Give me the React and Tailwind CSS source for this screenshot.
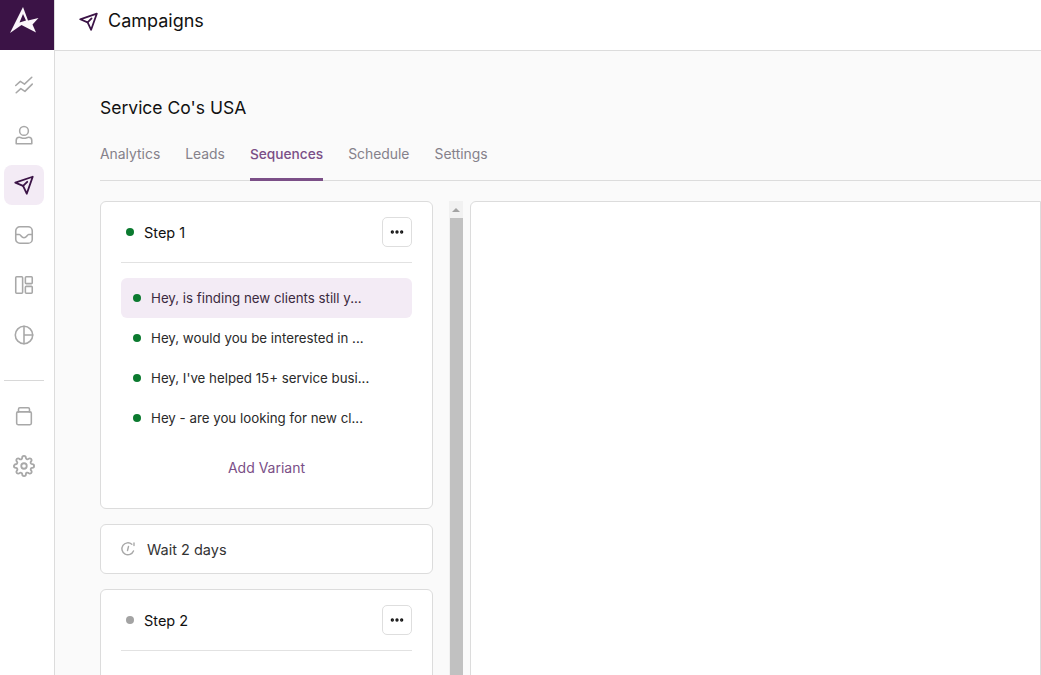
import { FiSettings, FiMoreHorizontal } from 'react-icons/fi'

const iconProps = { viewBox: '0 0 24 24', fill: 'none', stroke: 'currentColor', strokeWidth: 1.7, strokeLinecap: 'round', strokeLinejoin: 'round' }

const SendIcon = (props) => (
  <svg {...iconProps} strokeWidth="2" {...props}>
    <path d="M2.500 9.500 21.500 3 15 21.500 11 13Z" />
    <path d="M11 13l4.500-4.500" />
  </svg>
)

const TrendIcon = (props) => (
  <svg {...iconProps} {...props}>
    <path d="M3 12.500 8 8l4.500 3L20.500 3.500" />
    <path d="M3.500 20.500 8.500 16l4.500 3L21 11" />
  </svg>
)

const UserIcon = (props) => (
  <svg {...iconProps} {...props}>
    <circle cx="12" cy="7.500" r="4.800" />
    <path d="M3.500 21.500V18a3.500 3.500 0 0 1 3.500-3.500c1.500 0 2.500 1 5 1s3.500-1 5-1a3.500 3.500 0 0 1 3.500 3.500v3.500Z" />
  </svg>
)

const InboxIcon = (props) => (
  <svg {...iconProps} {...props}>
    <rect x="3" y="3" width="18" height="18" rx="4.500" />
    <path d="M3 11.500h4c1.500 0 2 3.500 5 3.500s3.500-3.500 5-3.500h4" />
  </svg>
)

const LayoutIcon = (props) => (
  <svg {...iconProps} {...props}>
    <rect x="3" y="3" width="7.500" height="18" rx="1" />
    <rect x="13.500" y="3" width="7.500" height="7.500" rx="1" />
    <rect x="13.500" y="13.500" width="7.500" height="7.500" rx="1" />
  </svg>
)

const PieIcon = (props) => (
  <svg {...iconProps} {...props}>
    <circle cx="12" cy="12" r="9.500" />
    <path d="M12 2.500v19M12 12h9.500" />
  </svg>
)

const BookIcon = (props) => (
  <svg {...iconProps} {...props}>
    <path d="M6 7.500V4.500A1.500 1.500 0 0 1 7.500 3h9A1.500 1.500 0 0 1 18 4.500V7.500" />
    <rect x="4" y="7.500" width="16" height="14" rx="1.500" />
  </svg>
)

const WaitIcon = (props) => (
  <svg viewBox="0 0 16 16" fill="none" stroke="currentColor" strokeWidth="1.4" strokeLinecap="round" {...props}>
    <path d="M11.800 3.200A6 6 0 1 0 13.500 10" />
    <path d="M8.500 5.500 7.500 9.500M14 2v2.500" />
  </svg>
)

const Logo = () => (
  <svg viewBox="0 0 55 50" className="w-[55px] h-[50px]" fill="#fbf6fb" fillRule="evenodd">
    <path d="M23 7 10 33 21.500 25 36 32.500 32.500 24.500 38.500 18 28 20.500ZM23 14 19.500 22.500 26 20.500Z" />
  </svg>
)

const tabs = ['Analytics', 'Leads', 'Sequences', 'Schedule', 'Settings']

const variants = [
  'Hey, is finding new clients still y...',
  'Hey, would you be interested in ...',
  "Hey, I've helped 15+ service busi...",
  'Hey - are you looking for new cl...',
]

const NavItem = ({ icon: Icon, active }) => (
  <div className={`w-10 h-10 rounded-lg flex items-center justify-center ${active ? 'bg-[#f3ebf5] text-[#3b1346]' : 'text-[#a8a8a8]'}`}>
    <Icon className="w-[22px] h-[22px]" />
  </div>
)

const StepHeader = ({ label, dot }) => (
  <div className="flex items-center justify-between h-[61px] border-b border-[#e2e2e2]">
    <div className="flex items-center pl-[5px]">
      <span className={`w-2 h-2 rounded-full ${dot}`} />
      <span className="ml-[10px] mt-[2px] text-[14.5px] text-[#111]">{label}</span>
    </div>
    <button className="w-[30px] h-[30px] border border-[#dedede] rounded-[5px] flex items-center justify-center text-[#111] bg-white">
      <FiMoreHorizontal className="w-4 h-4" strokeWidth={3} />
    </button>
  </div>
)

export default function App() {
  return (
    <div className="h-[675px] w-[1041px] overflow-hidden flex bg-[#fafafa] text-[#111] font-['Inter','Liberation_Sans',sans-serif]">
      <aside className="w-[55px] shrink-0 bg-white border-r border-[#dcdcdc] flex flex-col">
        <div className="h-[50px] bg-[#3b1346]">
          <Logo />
        </div>
        <nav className="flex flex-col pt-[15px] pl-1">
          <div className="flex flex-col gap-[10px]">
            <NavItem icon={TrendIcon} />
            <NavItem icon={UserIcon} />
            <NavItem icon={SendIcon} active />
            <NavItem icon={InboxIcon} />
            <NavItem icon={LayoutIcon} />
            <NavItem icon={PieIcon} />
          </div>
          <div className="w-10 border-t border-[#d8d8d8] mt-[25px] mb-[15px]" />
          <div className="flex flex-col gap-[10px]">
            <NavItem icon={BookIcon} />
            <NavItem icon={FiSettings} />
          </div>
        </nav>
      </aside>

      <div className="flex-1 min-w-0 flex flex-col">
        <header className="h-[51px] shrink-0 bg-white border-b border-[#dcdcdc] flex items-center pl-[23px] pb-2">
          <SendIcon className="w-[21px] h-[21px] text-[#3b1346]" />
          <h1 className="ml-[9px] mb-[2px] text-[18px] text-[#111]">Campaigns</h1>
        </header>

        <main className="flex-1 min-h-0 pl-[45px] pt-[46px]">
          <h2 className="text-[17.5px] leading-[22px] text-[#111]">Service Co's USA</h2>

          <div className="flex gap-[25px] mt-[21px] h-[41px] border-b border-[#dcdcdc]">
            {tabs.map((tab) => (
              <div
                key={tab}
                className={`leading-[28px] h-[41px] ${tab === 'Sequences' ? 'text-[13.7px] text-[#7b4f87] font-medium border-b-[3px] border-[#7b4f87]' : 'text-[13.9px] text-[#85818a]'}`}
              >
                {tab}
              </div>
            ))}
          </div>

          <div className="flex mt-5">
            <div className="w-[333px] shrink-0 flex flex-col gap-[15px]">
              <section className="h-[308px] bg-white border border-[#dcdcdc] rounded-md px-5">
                <StepHeader label="Step 1" dot="bg-[#0b7a2f]" />
                <div className="mt-[15px] flex flex-col">
                  {variants.map((v, i) => (
                    <div key={v} className={`h-10 flex items-center pl-3 rounded-md ${i === 0 ? 'bg-[#f3ebf5]' : ''}`}>
                      <span className="w-2 h-2 rounded-full bg-[#0b7a2f] shrink-0" />
                      <span className={`ml-[10px] mt-[2px] whitespace-nowrap text-[13.3px] ${i === 0 ? 'text-[#3b2a40]' : 'text-[#2a2a2a]'}`}>{v}</span>
                    </div>
                  ))}
                </div>
                <div className="mt-[20px] text-center text-[14px] leading-[20px] text-[#7b4f87]">Add Variant</div>
              </section>

              <section className="h-[50px] shrink-0 bg-white border border-[#dcdcdc] rounded-md flex items-center pl-[19px]">
                <WaitIcon className="w-4 h-4 text-[#a8a8a8]" />
                <span className="ml-[11px] mt-[2px] text-[14.5px] text-[#333]">Wait 2 days</span>
              </section>

              <section className="h-[200px] shrink-0 bg-white border border-[#dcdcdc] rounded-md px-5">
                <StepHeader label="Step 2" dot="bg-[#a3a3a3]" />
              </section>
            </div>

            <div className="w-[14px] ml-[16px] shrink-0 bg-[#f1f1f1] flex flex-col items-center h-[600px]">
              <div className="h-[17px] flex items-center justify-center">
                <span className="w-0 h-0 border-l-[4px] border-r-[4px] border-b-[4px] border-l-transparent border-r-transparent border-b-[#a3a3a3]" />
              </div>
              <div className="w-[13px] flex-1 bg-[#c1c1c1]" />
            </div>

            <div className="ml-[7px] flex-1 h-[600px] bg-white border border-[#dcdcdc] rounded-tl-md" />
          </div>
        </main>
      </div>
    </div>
  )
}
